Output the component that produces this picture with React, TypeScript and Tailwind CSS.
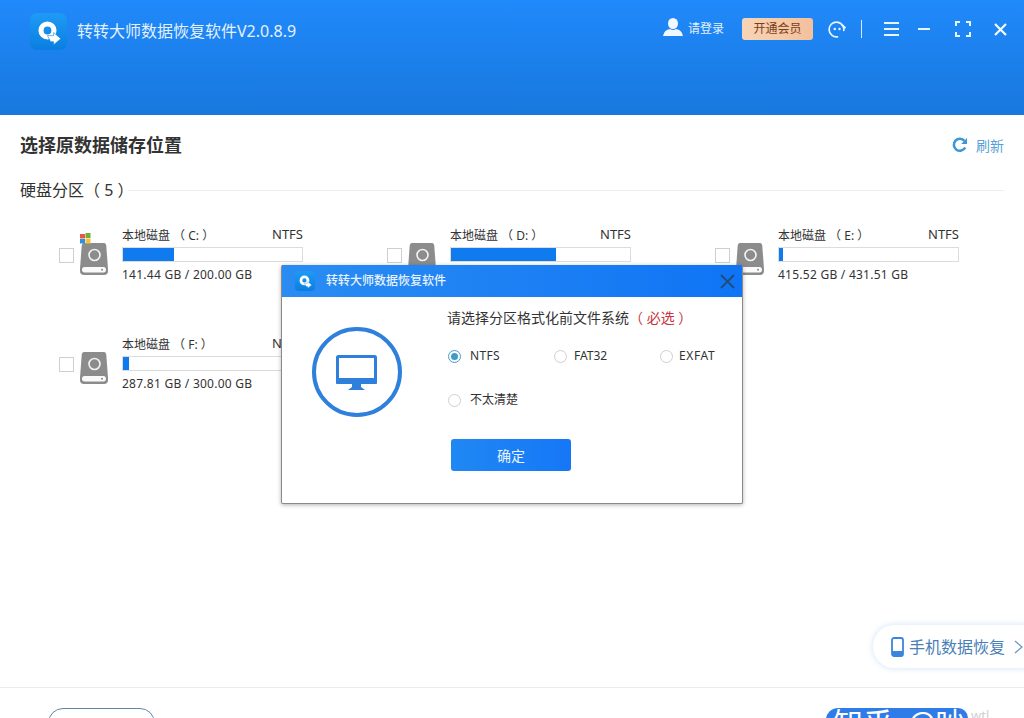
const font = { fontFamily: '"Noto Sans", "Noto Sans CJK SC", sans-serif' };

function Logo({ size }: { size: number }) {
  return (
    <svg width={size} height={size} viewBox="0 0 36 36" className="shrink-0">
      <defs>
        <linearGradient id="lg" x1="0" y1="0" x2="0" y2="1">
          <stop offset="0" stopColor="#1e9bf5" />
          <stop offset="1" stopColor="#0a7ee0" />
        </linearGradient>
      </defs>
      <rect width="36" height="36" rx="7" fill="url(#lg)" />
      <circle cx="17" cy="17" r="6.3" fill="none" stroke="#fff" strokeWidth="5" />
      <path d="M17 22 H23 V19 L30 25 L23 31 V28 H20 Z" fill="#fff" stroke="#1584e6" strokeWidth="0.6" />
    </svg>
  );
}

function DiskIcon({ win }: { win?: boolean }) {
  return (
    <div className="relative w-[28px] h-[32px] shrink-0">
      {win && (
        <svg width="11" height="11" viewBox="0 0 11 11" className="absolute left-0 top-[-10px]">
          <rect x="0" y="1" width="5" height="4.5" fill="#e8593f" />
          <rect x="5.5" y="0" width="5" height="5" fill="#6fb03a" />
          <rect x="0" y="6" width="5" height="4.5" fill="#2f8fe0" />
          <rect x="5.5" y="5.5" width="5" height="5" fill="#f2c43a" />
        </svg>
      )}
      <svg width="28" height="32" viewBox="0 0 28 32">
        <path d="M4 0 H24 Q26 0 26.3 3 L28 26 V28 Q28 32 24 32 H4 Q0 32 0 28 V26 L1.7 3 Q2 0 4 0 Z" fill="#8c8c8c" />
        <circle cx="14.5" cy="12" r="5.5" fill="none" stroke="#f2f2f2" strokeWidth="1.6" />
        <rect x="2" y="24" width="24" height="5.5" rx="2.7" fill="#fafafa" />
        <circle cx="22" cy="26.8" r="1" fill="#8c8c8c" />
      </svg>
    </div>
  );
}

function Disk({ name, fs, pct, size, win }: { name: string; fs: string; pct: number; size: string; win?: boolean }) {
  return (
    <div className="flex items-center h-[60px]">
      <div className="w-[15px] h-[15px] border border-[#cfcfcf] bg-white shrink-0" />
      <div className="ml-[6px] mt-[8px]">
        <DiskIcon win={win} />
      </div>
      <div className="ml-[14px] w-[181px] text-[#333] text-[12px] leading-[16px]">
        <div className="flex justify-between h-[16px]">
          <span className="whitespace-pre">{name}</span>
          <span className="text-[13px] -mt-[2px]">{fs}</span>
        </div>
        <div className="h-[15px] mt-[3px] border border-[#dcdcdc] bg-white">
          <div className="h-full bg-[#0f7bef]" style={{ width: `${pct}%` }} />
        </div>
        <div className="mt-[5px] h-[16px] tracking-[0.25px] whitespace-nowrap">{size}</div>
      </div>
    </div>
  );
}

function Radio({ label, checked, className, gap }: { label: string; checked?: boolean; className?: string; gap?: string }) {
  return (
    <div className={`flex items-center text-[12px] text-[#333] ${className ?? ""}`}>
      <span className={`w-[13px] h-[13px] rounded-full border flex items-center justify-center shrink-0 ${checked ? "border-[#4a9bc4]" : "border-[#cfcfcf]"}`}>
        {checked && <span className="w-[7px] h-[7px] rounded-full bg-[#3f9cc6]" />}
      </span>
      <span className={gap ?? "ml-[9px]"}>{label}</span>
    </div>
  );
}

export default function App() {
  return (
    <div className="relative w-[1024px] h-[718px] overflow-hidden bg-white flex flex-col" style={font}>
      <header className="h-[115px] shrink-0 bg-gradient-to-b from-[#2089fb] to-[#1878dd] flex items-start px-[30px] pt-[13px] text-white">
        <Logo size={37} />
        <div className="ml-[10px] mt-[7px] text-[16px] leading-[22px] text-[#e3f1ff] whitespace-nowrap">转转大师数据恢复软件V2.0.8.9</div>
        <div className="ml-auto flex items-center h-[32px] mt-0 mr-[-13px]">
          <svg width="20" height="18" viewBox="0 0 20 18" className="mb-[5px]">
            <ellipse cx="10" cy="5.5" rx="5" ry="5.5" fill="#f0f7ff" />
            <path d="M0 18 Q1 12 7 11 Q10 13 13 11 Q19 12 20 18 Z" fill="#f0f7ff" />
          </svg>
          <span className="ml-[5px] text-[12px] text-[#e3f1ff]">请登录</span>
          <div className="ml-[18px] w-[71px] h-[22px] rounded-[3px] bg-gradient-to-r from-[#f7d4b8] to-[#f3c09c] text-[#7a3e17] text-[12px] flex items-center justify-center">开通会员</div>
          <svg width="18" height="18" viewBox="0 0 18 18" className="ml-[15px]" fill="none">
            <path d="M15.8 10.5 A7.4 7.4 0 1 0 9.5 16.8" stroke="#e8f4ff" strokeWidth="1.7" strokeLinecap="round" />
            <circle cx="6.8" cy="9" r="1.2" fill="#e8f4ff" />
            <circle cx="11.5" cy="9" r="1.2" fill="#e8f4ff" />
            <path d="M13.5 4.5 L17.5 8" stroke="#e8f4ff" strokeWidth="1.7" />
          </svg>
          <div className="ml-[15px] w-px h-[18px] bg-[#d6eaff]" />
          <svg width="15" height="14" viewBox="0 0 15 14" className="ml-[22px]">
            <rect y="0" width="15" height="2" fill="#e8f4ff" />
            <rect y="6" width="15" height="2" fill="#e8f4ff" />
            <rect y="12" width="15" height="2" fill="#e8f4ff" />
          </svg>
          <svg width="12" height="2" viewBox="0 0 12 2" className="ml-[19px]">
            <rect width="12" height="2" fill="#e8f4ff" />
          </svg>
          <svg width="16" height="16" viewBox="0 0 16 16" fill="none" className="ml-[25px]">
            <path d="M1 5 V1 H5 M11 1 H15 V5 M15 11 V15 H11 M5 15 H1 V11" stroke="#e8f4ff" strokeWidth="2" />
          </svg>
          <svg width="13" height="13" viewBox="0 0 13 13" className="ml-[23px]">
            <path d="M1 1 L12 12 M12 1 L1 12" stroke="#f4faff" strokeWidth="2.2" />
          </svg>
        </div>
      </header>

      <main className="flex-1 px-[20px] pt-[18px]">
        <div className="flex items-center justify-between h-[24px]">
          <h1 className="text-[18px] font-bold text-[#333] leading-[24px]">选择原数据储存位置</h1>
          <div className="flex items-center text-[14px] text-[#5a9fd6]">
            <svg width="16" height="16" viewBox="0 0 16 16" fill="none">
              <path d="M13.2 10.5 A6 6 0 1 1 12.5 4" stroke="#3e97d8" strokeWidth="2.6" />
              <path d="M15 1 V7 H9.2 Z" fill="#3e97d8" />
            </svg>
            <span className="ml-[8px]">刷新</span>
          </div>
        </div>
        <div className="flex items-center mt-[23px] h-[20px]">
          <span className="text-[16px] text-[#333] whitespace-pre">硬盘分区（ 5 ）</span>
          <div className="flex-1 h-px bg-[#eeeeee] ml-[-5px]" />
        </div>
        <div className="grid grid-cols-[328px_328px_328px] auto-rows-[109px] ml-[39px] mt-[25px]">
          <Disk name="本地磁盘 （ C: ）" fs="NTFS" pct={28.7} size="141.44 GB / 200.00 GB" win />
          <Disk name="本地磁盘 （ D: ）" fs="NTFS" pct={58.6} size="" />
          <Disk name="本地磁盘 （ E: ）" fs="NTFS" pct={2.2} size="415.52 GB / 431.51 GB" />
          <Disk name="本地磁盘 （ F: ）" fs="NTFS" pct={3.3} size="287.81 GB / 300.00 GB" />
        </div>
      </main>

      <footer className="h-[31px] shrink-0 border-t border-[#ececec] pl-[48px] pt-[20px]">
        <div className="w-[107px] h-[30px] rounded-[15px] border border-[#5f86a8] bg-white" />
      </footer>

      {/* phone recovery pill */}
      <div className="absolute left-[873px] top-[625px] w-[170px] h-[43px] rounded-[21px] bg-white shadow-[0_0_6px_rgba(120,170,230,0.35)] flex items-center pl-[18px] text-[16px] text-[#4a7fb5]">
        <svg width="13" height="20" viewBox="0 0 13 20" fill="none">
          <rect x="1" y="1" width="11" height="18" rx="2" stroke="#3a86dc" strokeWidth="1.8" />
          <rect x="1" y="14" width="11" height="5" fill="#3a86dc" />
        </svg>
        <span className="ml-[5px]">手机数据恢复</span>
        <svg width="9" height="14" viewBox="0 0 9 14" fill="none" className="ml-[9px]">
          <path d="M1 1 L8 7 L1 13" stroke="#6d9cc8" strokeWidth="1.3" />
        </svg>
      </div>

      {/* watermark */}
      <div className="absolute left-[826px] top-[708px] h-[24px] w-[142px] rounded-l-[12px] rounded-tr-[10px] bg-[#2f7be8] text-white text-[30px] leading-[30px] pl-[7px] whitespace-pre overflow-hidden">知乎  @吵</div>
      <div className="absolute left-[971px] top-[708px] text-[13px] leading-[14px] text-[#cfcfcf]">wtl</div>

      {/* dialog */}
      <div className="absolute left-[281px] top-[265px] w-[462px] h-[239px] bg-white rounded-[2px] border-r border-b border-l border-[#8a8a8a] shadow-[0_1px_4px_rgba(0,0,0,0.3)]">
        <div className="h-[32px] bg-gradient-to-r from-[#2a8cf2] to-[#0f74f5] flex items-center pl-[13px] pr-[7px]">
          <Logo size={20} />
          <span className="ml-[11px] text-[12px] text-[#e6f2ff] font-medium">转转大师数据恢复软件</span>
          <svg width="15" height="15" viewBox="0 0 15 15" className="ml-auto">
            <path d="M1 1 L14 14 M14 1 L1 14" stroke="#1f4f7f" strokeWidth="2" />
          </svg>
        </div>
        <div className="flex">
          <div className="ml-[30px] mt-[30px] w-[90px] h-[90px] rounded-full border-[4px] border-[#2f7fdc] flex items-center justify-center shrink-0">
            <svg width="42" height="36" viewBox="0 0 42 36" className="mt-[1px]">
              <rect x="1.5" y="1.5" width="38" height="26" rx="1" fill="#fff" stroke="#2f7fdc" strokeWidth="3" />
              <rect x="0" y="23" width="41" height="6" rx="1" fill="#2f7fdc" />
              <path d="M16 29 H25 V32 L29 35 H12 L16 32 Z" fill="#2f7fdc" />
            </svg>
          </div>
          <div className="ml-[45px] flex-1 pt-[12px]">
            <div className="text-[14px] leading-[18px] text-[#333] whitespace-pre">
              请选择分区格式化前文件系统<span className="text-[#c8323c]">（ 必选 ）</span>
            </div>
            <div className="flex mt-[21px] h-[16px] ml-[1px]">
              <Radio label="NTFS" checked className="w-[106px] tracking-[0.3px]" />
              <Radio label="FAT32" className="w-[106px]" gap="ml-[7px]" />
              <Radio label="EXFAT" className="tracking-[0.6px]" gap="ml-[6px]" />
            </div>
            <Radio label="不太清楚" className="mt-[28px] h-[16px] ml-[1px]" />
            <div className="ml-[4px] mt-[31px] w-[120px] h-[32px] rounded-[3px] bg-gradient-to-r from-[#2088f3] to-[#1677f7] text-[#e8f3ff] text-[14px] flex items-center justify-center">确定</div>
          </div>
        </div>
      </div>
    </div>
  );
}
